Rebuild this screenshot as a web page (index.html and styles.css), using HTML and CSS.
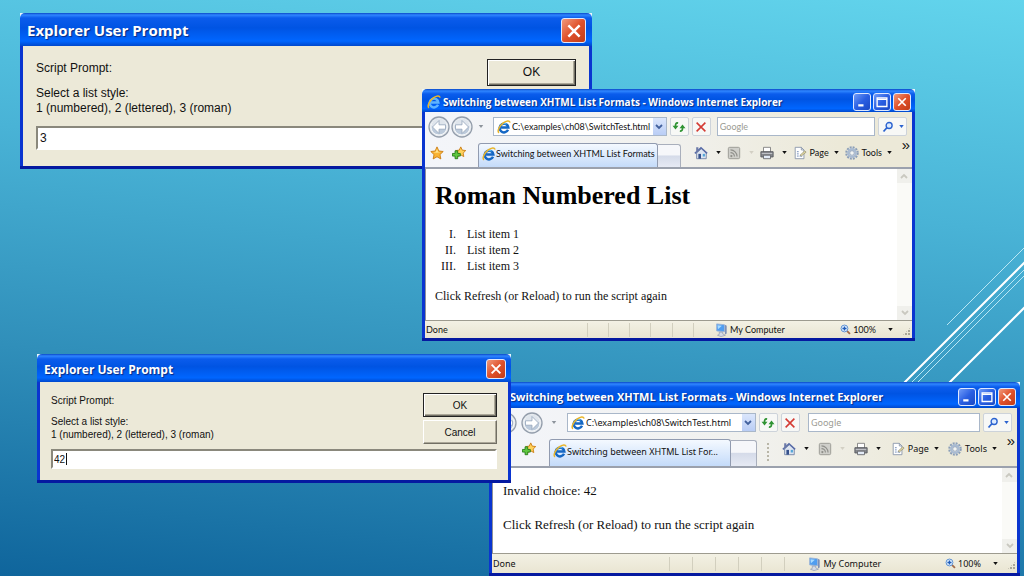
FILE: index.html
```html
<!DOCTYPE html>
<html lang="en">
<head>
    <meta charset="UTF-8">
    <title>Switching between XHTML List Formats</title>
    <link rel="stylesheet" href="styles.css">
</head>
<body>
    <!-- shared icons -->
    <svg class="sprite" aria-hidden="true">
        <symbol id="ie" viewBox="0 0 16 16">
            <path d="M12.6 11.2A5 5 0 1 1 13 8.6H4.6" fill="none" stroke="currentColor" stroke-width="2.8"/>
            <path d="M4.2 6.7A4.6 4.6 0 0 1 11 4.6" fill="none" stroke="#5cb8f4" stroke-width="1.3"/>
            <path d="M2.2 14.6C-.2 12.6 3 6.6 7.2 3.4 10.6.8 14.8.2 14.6 3" fill="none" stroke="#e9b62c" stroke-width="1.8"/>
        </symbol>
        <symbol id="back" viewBox="0 0 22 22">
            <circle cx="11" cy="11" r="10" fill="#e6eaee" stroke="#939dab" stroke-width="1.3"/>
            <circle cx="11" cy="11" r="8" fill="#bccadb" stroke="#f6f8fa"/>
            <path d="M3.5 10a7.5 7.5 0 0 1 15 0c-5 2-10 2-15 0z" fill="#dfe5ec"/>
            <path d="M11 4.500L4.500 11l6.500 6.500V13.200H17.500V8.800H11z" fill="#fff" stroke="#94a5ba" stroke-width=".8"/>
        </symbol>
        <symbol id="star" viewBox="0 0 16 16">
            <path d="M8 1l2.100 4.700 5 .6-3.700 3.500 1 5L8 12.300 3.600 14.800l1-5L.9 6.300l5-.6z" fill="#f9b233" stroke="#c97a10"/>
            <path d="M8 3.200l1.300 3.300 3.200.5-5 .8-3.800-.7 3-.6z" fill="#ffe58f"/>
        </symbol>
        <symbol id="addstar" viewBox="0 0 16 16">
            <path d="M10 1l1.700 3.700 4 .5-3 2.900.8 4-3.500-2-3.500 2 .8-4-3-2.900 4-.5z" fill="#ffd15a" stroke="#c97a10"/>
            <path d="M3.500 5.500h3v3h3v3h-3v3h-3v-3h-3v-3h3z" fill="#5fc840" stroke="#237a16"/>
        </symbol>
        <symbol id="refresh" viewBox="0 0 16 16">
            <path d="M7 3.500C4.300 3 3.800 5 4 8M9 12.500c2.700.5 3.200-1.500 3-4.500" fill="none" stroke="#2f9433" stroke-width="2"/>
            <path d="M.6 6.500h6.800L4 10.800zM8.600 9.500h6.800L12 5.200z" fill="#2f9433"/>
        </symbol>
        <symbol id="stop" viewBox="0 0 16 16">
            <path d="M3 3l10 10M13 3L3 13" stroke="#d43b34" stroke-width="1.800"/>
        </symbol>
        <symbol id="search" viewBox="0 0 16 16">
            <circle cx="9.500" cy="6" r="4" fill="#dcebff" stroke="#2a62cf" stroke-width="1.800"/>
            <path d="M6.500 9L2 14" stroke="#2a62cf" stroke-width="2.400"/>
        </symbol>
        <symbol id="home" viewBox="0 0 16 16">
            <path d="M3 8v6.500h11V8L8.500 3z" fill="#dde4f0" stroke="#7182a3"/>
            <path d="M1 8.500L8 2l7 6.500" fill="none" stroke="#5a6da8" stroke-width="1.800"/>
            <path d="M2.500 1.500h2.500v4L2.500 7z" fill="#6d7aa8"/>
            <path d="M5 9h3v5.500H5z" fill="#36518c"/>
            <path d="M10 9h2.500v3H10z" fill="#53a5d8"/>
        </symbol>
        <symbol id="feed" viewBox="0 0 16 16">
            <rect x="1.500" y="1.500" width="13" height="13" rx="1.500" fill="#cfcfca" stroke="#96968f"/>
            <circle cx="5" cy="11.500" r="1.300" fill="#8f8f8a"/>
            <path d="M4 7.500a4.500 4.500 0 0 1 4.500 4.500M4 4.500A7.500 7.500 0 0 1 11.500 12" fill="none" stroke="#8f8f8a" stroke-width="1.300"/>
        </symbol>
        <symbol id="print" viewBox="0 0 16 16">
            <path d="M4 1.500h8V7H4z" fill="#fff" stroke="#7d7d7d"/>
            <path d="M1 6.500h14v6H1z" fill="#85878c" stroke="#55575b"/>
            <path d="M2 8.500h12" stroke="#c9cbd0"/>
            <path d="M4 10.500h8v4H4z" fill="#e3ebf7" stroke="#66686c"/>
        </symbol>
        <symbol id="page" viewBox="0 0 16 16">
            <path d="M2.500 1.500h7l3 3v10h-10z" fill="#fff" stroke="#8793a8"/>
            <path d="M9.500 1.500v3h3" fill="none" stroke="#8793a8"/>
            <path d="M4.500 6.500h2M4.500 9h2M4.500 11.500h2M7.500 11.500h3" stroke="#6582b4"/>
            <path d="M8 10.500l5.500-5 1.500 1.500-5.500 4.500z" fill="#e3d9a2" stroke="#888368" stroke-width=".7"/>
        </symbol>
        <symbol id="gear" viewBox="0 0 16 16">
            <circle cx="8" cy="8" r="6.500" fill="none" stroke="#8b9eb8" stroke-width="2.400" stroke-dasharray="2.200 1.200"/>
            <circle cx="8" cy="8" r="4.300" fill="#f3f5f3" stroke="#a9bbd2" stroke-width="2.600"/>
            <circle cx="8" cy="8" r="2.600" fill="none" stroke="#7187a6" stroke-width=".7"/>
        </symbol>
        <symbol id="computer" viewBox="0 0 16 16">
            <path d="M3 1l9 1v8l-9-1z" fill="#4f9df0" stroke="#9cb4d6"/>
            <path d="M4 2.500l5 .5-4.500 4z" fill="#a9dbff"/>
            <path d="M12.500 2l2 1v9l-2 1z" fill="#7c90b8"/>
            <path d="M6 10.500h4v2l3 1.500-5 1.500-4-1.500 2-1z" fill="#d5dbe6" stroke="#8491aa" stroke-width=".7"/>
        </symbol>
        <symbol id="zoom" viewBox="0 0 16 16">
            <path d="M10 10l4.500 4.500" stroke="#a36b48" stroke-width="2.600"/>
            <circle cx="6.500" cy="6.500" r="5" fill="#e2f0ff" stroke="#5b8fd0" stroke-width="1.400"/>
            <path d="M6.500 3.500v6M3.500 6.500h6" stroke="#1f5cb8" stroke-width="2"/>
        </symbol>
        <symbol id="close" viewBox="0 0 16 16">
            <path d="M3 3l10 10M13 3L3 13" stroke="#fff" stroke-width="2.200"/>
        </symbol>
        <symbol id="minimize" viewBox="0 0 16 16">
            <path d="M3 12.500h7" stroke="#fff" stroke-width="3"/>
        </symbol>
        <symbol id="maximize" viewBox="0 0 16 16">
            <path d="M1.500 2.500h13v11.500h-13zM2 4.500h12" fill="none" stroke="#fff" stroke-width="1.800"/>
        </symbol>
        <symbol id="caret" viewBox="0 0 6 4">
            <path d="M0 0h6L3 4z" fill="currentColor"/>
        </symbol>
        <symbol id="chevron" viewBox="0 0 8 6">
            <path d="M1 1l3 3 3-3" fill="none" stroke="currentColor" stroke-width="1.800"/>
        </symbol>
    </svg>

    <svg class="streaks" viewBox="0 0 130 150" aria-hidden="true">
        <path d="M53 85l77-77M17 143L131 29M23 143L131 35" stroke="#b9e6f4" stroke-width="1" fill="none"/>
        <path d="M9 144L131 22M55 143l76-76" stroke="#fff" stroke-width="2" fill="none"/>
    </svg>

    <form class="window dialog dialog-roman">
        <header class="titlebar">
            <span class="caption">Explorer User Prompt</span>
            <button type="button" class="win-btn close" aria-label="Close"><svg><use href="#close"/></svg></button>
        </header>
        <div class="dialog-body">
            <div class="dialog-top">
                <div class="message">
                    <p>Script Prompt:</p>
                    <label for="answer1">Select a list style:<br>1 (numbered), 2 (lettered), 3 (roman)</label>
                </div>
                <div class="dialog-buttons">
                    <button type="button" class="btn default">OK</button>
                </div>
            </div>
            <input type="text" id="answer1" class="answer" value="3">
        </div>
    </form>

    <section class="window browser browser-roman">
        <header class="titlebar">
            <svg class="icon"><use href="#ie"/></svg>
            <span class="caption">Switching between XHTML List Formats - Windows Internet Explorer</span>
            <button type="button" class="win-btn" aria-label="Minimize"><svg><use href="#minimize"/></svg></button>
            <button type="button" class="win-btn" aria-label="Maximize"><svg><use href="#maximize"/></svg></button>
            <button type="button" class="win-btn close" aria-label="Close"><svg><use href="#close"/></svg></button>
        </header>
        <div class="chrome">
            <div class="nav-row">
                <div class="travel">
                    <button type="button" aria-label="Back"><svg><use href="#back"/></svg></button>
                    <button type="button" class="forward" aria-label="Forward"><svg><use href="#back"/></svg></button>
                    <svg class="caret faded"><use href="#caret"/></svg>
                </div>
                <div class="address">
                    <svg class="icon"><use href="#ie"/></svg>
                    <input type="text" aria-label="Address" value="C:\examples\ch08\SwitchTest.html">
                    <button type="button" class="drop" aria-label="Show addresses"><svg><use href="#chevron"/></svg></button>
                </div>
                <button type="button" class="nav-btn" aria-label="Refresh"><svg class="icon"><use href="#refresh"/></svg></button>
                <button type="button" class="nav-btn" aria-label="Stop"><svg class="icon"><use href="#stop"/></svg></button>
                <input type="text" class="search-box" aria-label="Search" placeholder="Google">
                <button type="button" class="nav-btn search-btn" aria-label="Search"><svg class="icon"><use href="#search"/></svg><svg class="caret"><use href="#caret"/></svg></button>
            </div>
            <div class="tab-row">
                <div class="favorites">
                    <button type="button" aria-label="Favorites"><svg class="icon"><use href="#star"/></svg></button>
                    <button type="button" aria-label="Add to favorites"><svg class="icon"><use href="#addstar"/></svg></button>
                </div>
                <a class="tab" href="#"><svg class="icon"><use href="#ie"/></svg><span>Switching between XHTML List Formats</span></a>
                <button type="button" class="new-tab" aria-label="New tab"></button>
                <nav class="commands">
                    <button type="button" aria-label="Home"><svg class="icon"><use href="#home"/></svg><svg class="caret"><use href="#caret"/></svg></button>
                    <button type="button" aria-label="Feeds"><svg class="icon"><use href="#feed"/></svg><svg class="caret off"><use href="#caret"/></svg></button>
                    <button type="button" aria-label="Print"><svg class="icon"><use href="#print"/></svg><svg class="caret"><use href="#caret"/></svg></button>
                    <button type="button" class="labelled"><svg class="icon"><use href="#page"/></svg>Page<svg class="caret"><use href="#caret"/></svg></button>
                    <button type="button" class="labelled"><svg class="icon"><use href="#gear"/></svg>Tools<svg class="caret"><use href="#caret"/></svg></button>
                </nav>
                <button type="button" class="more" aria-label="More">»</button>
            </div>
        </div>
        <div class="viewport">
            <main class="document">
                <h1>Roman Numbered List</h1>
                <ol>
                    <li>List item 1</li>
                    <li>List item 2</li>
                    <li>List item 3</li>
                </ol>
                <p>Click Refresh (or Reload) to run the script again</p>
            </main>
            <div class="scrollbar">
                <button type="button" class="up" aria-label="Scroll up"><svg><use href="#chevron"/></svg></button>
                <button type="button" aria-label="Scroll down"><svg><use href="#chevron"/></svg></button>
            </div>
        </div>
        <footer class="statusbar">
            <span class="status">Done</span>
            <span class="panes"><i></i><i></i><i></i><i></i><i></i><i></i></span>
            <span class="zone"><svg class="icon"><use href="#computer"/></svg>My Computer</span>
            <button type="button" class="zoom"><svg class="icon"><use href="#zoom"/></svg>100%<svg class="caret"><use href="#caret"/></svg></button>
            <span class="grip"></span>
        </footer>
    </section>

    <section class="window browser browser-invalid">
        <header class="titlebar">
            <svg class="icon"><use href="#ie"/></svg>
            <span class="caption">Switching between XHTML List Formats - Windows Internet Explorer</span>
            <button type="button" class="win-btn" aria-label="Minimize"><svg><use href="#minimize"/></svg></button>
            <button type="button" class="win-btn" aria-label="Maximize"><svg><use href="#maximize"/></svg></button>
            <button type="button" class="win-btn close" aria-label="Close"><svg><use href="#close"/></svg></button>
        </header>
        <div class="chrome">
            <div class="nav-row">
                <div class="travel">
                    <button type="button" aria-label="Back"><svg><use href="#back"/></svg></button>
                    <button type="button" class="forward" aria-label="Forward"><svg><use href="#back"/></svg></button>
                    <svg class="caret faded"><use href="#caret"/></svg>
                </div>
                <div class="address">
                    <svg class="icon"><use href="#ie"/></svg>
                    <input type="text" aria-label="Address" value="C:\examples\ch08\SwitchTest.html">
                    <button type="button" class="drop" aria-label="Show addresses"><svg><use href="#chevron"/></svg></button>
                </div>
                <button type="button" class="nav-btn" aria-label="Refresh"><svg class="icon"><use href="#refresh"/></svg></button>
                <button type="button" class="nav-btn" aria-label="Stop"><svg class="icon"><use href="#stop"/></svg></button>
                <input type="text" class="search-box" aria-label="Search" placeholder="Google">
                <button type="button" class="nav-btn search-btn" aria-label="Search"><svg class="icon"><use href="#search"/></svg><svg class="caret"><use href="#caret"/></svg></button>
            </div>
            <div class="tab-row">
                <div class="favorites">
                    <button type="button" aria-label="Favorites"><svg class="icon"><use href="#star"/></svg></button>
                    <button type="button" aria-label="Add to favorites"><svg class="icon"><use href="#addstar"/></svg></button>
                </div>
                <a class="tab" href="#"><svg class="icon"><use href="#ie"/></svg><span>Switching between XHTML List For...</span></a>
                <button type="button" class="new-tab" aria-label="New tab"></button>
                <span class="handle"></span>
                <nav class="commands">
                    <button type="button" aria-label="Home"><svg class="icon"><use href="#home"/></svg><svg class="caret"><use href="#caret"/></svg></button>
                    <button type="button" aria-label="Feeds"><svg class="icon"><use href="#feed"/></svg><svg class="caret off"><use href="#caret"/></svg></button>
                    <button type="button" aria-label="Print"><svg class="icon"><use href="#print"/></svg><svg class="caret"><use href="#caret"/></svg></button>
                    <button type="button" class="labelled"><svg class="icon"><use href="#page"/></svg>Page<svg class="caret"><use href="#caret"/></svg></button>
                    <button type="button" class="labelled"><svg class="icon"><use href="#gear"/></svg>Tools<svg class="caret"><use href="#caret"/></svg></button>
                </nav>
                <button type="button" class="more" aria-label="More">»</button>
            </div>
        </div>
        <div class="viewport">
            <div class="document">
                <p>Invalid choice: 42</p>
                <p>Click Refresh (or Reload) to run the script again</p>
            </div>
            <div class="scrollbar">
                <button type="button" class="up" aria-label="Scroll up"><svg><use href="#chevron"/></svg></button>
                <button type="button" aria-label="Scroll down"><svg><use href="#chevron"/></svg></button>
            </div>
        </div>
        <footer class="statusbar">
            <span class="status">Done</span>
            <span class="panes"><i></i><i></i><i></i><i></i><i></i><i></i></span>
            <span class="zone"><svg class="icon"><use href="#computer"/></svg>My Computer</span>
            <button type="button" class="zoom"><svg class="icon"><use href="#zoom"/></svg>100%<svg class="caret"><use href="#caret"/></svg></button>
            <span class="grip"></span>
        </footer>
    </section>

    <form class="window dialog dialog-invalid">
        <header class="titlebar">
            <span class="caption">Explorer User Prompt</span>
            <button type="button" class="win-btn close" aria-label="Close"><svg><use href="#close"/></svg></button>
        </header>
        <div class="dialog-body">
            <div class="dialog-top">
                <div class="message">
                    <p>Script Prompt:</p>
                    <label for="answer2">Select a list style:<br>1 (numbered), 2 (lettered), 3 (roman)</label>
                </div>
                <div class="dialog-buttons">
                    <button type="button" class="btn default">OK</button>
                    <button type="button" class="btn">Cancel</button>
                </div>
            </div>
            <input type="text" id="answer2" class="answer" value="42">
        </div>
    </form>
</body>
</html>
```

FILE: styles.css
```css
* {
    margin: 0;
    padding: 0;
    box-sizing: border-box;
}

body {
    position: relative;
    min-height: 100vh;
    overflow: hidden;
    font-family: "Liberation Sans", Arial, sans-serif;
    background: linear-gradient(186deg, #62d4ec 0%, #49b3d6 34%, #308fba 66%, #0f659c 100%);
}

button,
input {
    font: inherit;
    color: inherit;
    border: none;
    background: none;
    min-width: 0;
}

svg {
    display: block;
}

.sprite {
    position: absolute;
    width: 0;
    height: 0;
}

.streaks {
    position: absolute;
    right: 0;
    top: 240px;
    width: 130px;
    height: 150px;
}

/* windows */
.window {
    position: absolute;
    background: linear-gradient(#e8f6fb 8px, #0a35d0 8px);
    border-bottom: 3px solid #0519a0;
}

.titlebar {
    display: flex;
    align-items: center;
    gap: 2px;
    color: #fff;
    font-family: "Open Sans", "Noto Sans", sans-serif;
    font-weight: bold;
    text-shadow: 1px 1px 1px #0a2a80;
    background: linear-gradient(#0a48c8 0, #2f86ff 2px, #0b5cec 5px, #0054e3 45%, #0066ff 85%, #0048cc 100%);
    border-radius: 5px 5px 0 0;
}

.caption {
    flex: 1;
    min-width: 0;
    white-space: nowrap;
}

.win-btn {
    display: flex;
    align-items: center;
    justify-content: center;
    width: 18px;
    height: 18px;
    border: 1px solid #dfe9ff;
    border-radius: 3px;
    background: linear-gradient(135deg, #6f9bf8, #2a5fe2 50%, #1b49c4);
}

.win-btn svg {
    width: 12px;
    height: 12px;
}

.win-btn.close {
    background: linear-gradient(135deg, #f09a7c, #e0512b 50%, #c23c17);
}

/* prompt dialogs */
.dialog {
    color: #111;
}

.dialog-body {
    margin: 0 3px;
    background: #ece9d8;
}

.dialog-top {
    display: flex;
    justify-content: space-between;
}

.message p {
    margin-bottom: 10px;
}

.dialog-buttons {
    display: flex;
    flex-direction: column;
    gap: 3px;
}

.btn {
    width: 74px;
    height: 24px;
    background: #ece9d8;
    border: 1px solid #fff;
    border-right-color: #716f64;
    border-bottom-color: #716f64;
    box-shadow: inset -1px -1px #aca899;
}

.btn.default {
    border: 1px solid #222;
    box-shadow: inset 1px 1px #fff, inset -1px -1px #716f64, inset -2px -2px #aca899;
}

.answer {
    display: block;
    width: 100%;
    background: #fff;
    border: 2px solid #fff;
    border-top-color: #8a887c;
    border-left-color: #8a887c;
    outline: none;
}

.dialog-roman {
    left: 20px;
    right: 432px;
    top: 13px;
    font-size: 12px;
    line-height: 15px;
}

.dialog-roman .titlebar {
    height: 33px;
    padding: 2px 6px 0 7px;
    font-size: 15px;
}

.dialog-roman .win-btn {
    width: 25px;
    height: 25px;
}

.dialog-roman .win-btn svg {
    width: 18px;
    height: 18px;
}

.dialog-roman .dialog-body {
    padding: 13px 13px 16px;
}

.dialog-roman .message {
    padding: 2px 0 10px;
}

.dialog-roman .btn {
    width: 89px;
    height: 27px;
}

.dialog-roman .answer {
    height: 24px;
    padding-left: 2px;
}

.dialog-invalid {
    left: 37px;
    right: 513px;
    top: 354px;
    font-size: 10px;
    line-height: 13px;
}

.dialog-invalid .titlebar {
    height: 28px;
    padding: 2px 5px 0 7px;
    font-size: 12px;
}

.dialog-invalid .win-btn {
    width: 20px;
    height: 20px;
}

.dialog-invalid .win-btn svg {
    width: 14px;
    height: 14px;
}

.dialog-invalid .dialog-body {
    padding: 11px;
}

.dialog-invalid .message {
    padding-top: 1px;
}

.dialog-invalid .message p {
    margin-bottom: 8px;
}

/* text caret after the typed number */
.dialog-invalid .answer {
    margin-top: 5px;
    height: 20px;
    padding-left: 1px;
    background: linear-gradient(#111, #111) 13px 2px / 1px 12px no-repeat #fff;
}

/* browser windows */
.browser {
    font-family: "Noto Sans", "Open Sans", sans-serif;
    font-size: 9px;
    color: #111;
}

.browser-roman {
    left: 422px;
    right: 109px;
    top: 89px;
    font-family: Lato, "Noto Sans", sans-serif;
}

.browser-invalid {
    left: 489px;
    right: 4px;
    top: 382px;
}

.browser .titlebar {
    padding: 3px 4px 0 5px;
}

.browser-roman .titlebar {
    height: 23px;
    font-size: 10px;
}

.browser-invalid .titlebar {
    height: 26px;
    font-size: 11px;
}

.icon {
    flex: none;
    width: 14px;
    height: 14px;
    color: #1467c4;
}

.titlebar .icon {
    color: #5fb4ff;
}

.caret {
    flex: none;
    width: 5px;
    height: 3px;
}

.caret.faded {
    color: #8d949c;
}

.caret.off {
    color: #d3d0c4;
}

.chrome {
    margin: 0 3px;
    background: linear-gradient(90deg, #f3f5fa 0%, #f1f1ee 50%, #ece9d8 85%);
    border-bottom: 2px solid #9ba1ad;
}

.nav-row {
    display: flex;
    align-items: center;
    gap: 3px;
    height: 29px;
    padding: 0 5px 0 3px;
}

.travel {
    display: flex;
    align-items: center;
    gap: 1px;
    width: 62px;
}

.travel button svg {
    width: 22px;
    height: 22px;
}

.travel .forward {
    transform: scaleX(-1);
}

.travel .caret {
    width: 6px;
    margin-left: 4px;
}

.address {
    display: flex;
    align-items: center;
    flex: 174 1 0;
    min-width: 0;
    height: 19px;
    padding-left: 3px;
    border: 1px solid #a9b7c9;
    background: #fff;
}

.address input {
    flex: 1;
    padding-left: 1px;
}

.drop {
    display: flex;
    align-items: center;
    justify-content: center;
    width: 13px;
    height: 17px;
    color: #42619d;
    background: linear-gradient(#dbe6fc, #b9cdf5);
}

.drop svg,
.scrollbar svg {
    width: 8px;
    height: 6px;
}

.nav-btn {
    display: flex;
    align-items: center;
    justify-content: center;
    width: 19px;
    height: 19px;
    border: 1px solid #cdd3da;
    border-radius: 2px;
    background: #f7f8f6;
}

.search-box {
    flex: 159 1 0;
    height: 19px;
    margin-left: 3px;
    padding-left: 2px;
    border: 1px solid #a9b7c9;
    background: #fff;
}

.search-box::placeholder {
    color: #9b9b93;
    opacity: 1;
}

.search-btn {
    width: 29px;
    gap: 5px;
    color: #2a62cf;
}

.search-btn .icon {
    width: 12px;
    height: 12px;
}

.tab-row {
    display: flex;
    align-items: flex-end;
    height: 26px;
    padding-left: 5px;
}

.favorites {
    display: flex;
    align-items: center;
    align-self: flex-start;
    gap: 8px;
    width: 48px;
    height: 23px;
}

.tab {
    display: flex;
    align-items: center;
    flex: none;
    width: 180px;
    height: 24px;
    padding: 0 0 4px 3px;
    border: 1px solid #919bb0;
    border-bottom: none;
    border-radius: 3px 3px 0 0;
    background: linear-gradient(#f4f9ff, #c4dbfa);
    color: #111;
    text-decoration: none;
    white-space: nowrap;
}

.new-tab {
    flex: none;
    width: 23px;
    height: 23px;
    border: 1px solid #a9afbc;
    border-left: none;
    border-bottom: none;
    border-radius: 0 3px 0 0;
    background: linear-gradient(#f6f7fa 45%, #d5dbe9 50%, #e6eaf4);
}

.handle {
    align-self: center;
    height: 18px;
    margin-left: 10px;
    border-left: 2px dotted #b9b6a8;
}

.commands {
    display: flex;
    flex: 1;
    align-items: center;
    align-self: flex-start;
    justify-content: space-between;
    height: 23px;
    padding: 0 8px 0 13px;
}

.commands button {
    display: flex;
    align-items: center;
    gap: 8px;
}

.commands .labelled {
    gap: 3px;
}

.commands .labelled .caret {
    margin-left: 2px;
}

.more {
    align-self: flex-start;
    width: 12px;
    font-family: "Liberation Sans", Arial, sans-serif;
    font-size: 15px;
    line-height: 8px;
}

.browser-invalid .nav-row,
.browser-invalid .tab-row {
    height: 29px;
}

.browser-invalid .travel {
    width: 69px;
    gap: 4px;
}

.browser-invalid .favorites {
    width: 52px;
    gap: 11px;
}

.browser-invalid .tab {
    width: 182px;
    height: 27px;
}

.browser-invalid .new-tab {
    width: 26px;
    height: 26px;
}

.browser-invalid .search-box {
    margin-left: 5px;
}

.viewport {
    display: flex;
    justify-content: space-between;
    margin: 0 3px;
    padding-left: 9px;
    background: #fff;
    border-left: 1px solid #8f9299;
}

.document {
    font-family: "Liberation Serif", "Times New Roman", serif;
    font-size: 12px;
    line-height: 16px;
    color: #111;
}

.document h1 {
    font-size: 26px;
    line-height: 32px;
    color: #000;
}

.document ol {
    list-style: upper-roman;
    padding-left: 24px;
}

.document li {
    padding-left: 8px;
}

.scrollbar {
    display: flex;
    flex-direction: column;
    justify-content: space-between;
    width: 15px;
    background: #fafaf7;
}

.scrollbar button {
    display: flex;
    align-items: center;
    justify-content: center;
    height: 14px;
    color: #c9c8c0;
    background: #f0f0ec;
}

.scrollbar .up {
    transform: rotate(180deg);
}

.browser-roman .document {
    padding: 11px 0 16px;
}

.browser-roman .document ol {
    margin: 14px 0;
}

.browser-invalid .viewport {
    padding-left: 10px;
}

.browser-invalid .document {
    padding: 14px 0 20px;
    font-size: 13px;
    line-height: 17px;
}

.browser-invalid .document p + p {
    margin-top: 17px;
}

.statusbar {
    display: flex;
    align-items: center;
    height: 18px;
    margin: 0 3px;
    padding-left: 1px;
    border-top: 1px solid #9d9b8f;
    background: linear-gradient(#f3f1e4, #e9e5d2);
}

.status {
    flex: 162;
}

.panes {
    display: flex;
    flex: 128;
    height: 14px;
}

.panes i {
    flex: 1;
    border-left: 1px solid #d2cfbe;
}

.zone,
.zoom {
    display: flex;
    align-items: center;
    gap: 2px;
}

.zone {
    flex: 127;
}

.zoom .icon {
    width: 11px;
    height: 11px;
}

.zoom .caret {
    margin-left: 10px;
}

.grip {
    width: 9px;
    height: 9px;
    margin: 4px 1px 0 9px;
    background: radial-gradient(circle at 1px 1px, #aaa798 1px, transparent 1px) 0 0 / 3px 3px;
    clip-path: polygon(100% 0, 100% 100%, 0 100%);
}

.browser-invalid .statusbar {
    height: 20px;
}
```
